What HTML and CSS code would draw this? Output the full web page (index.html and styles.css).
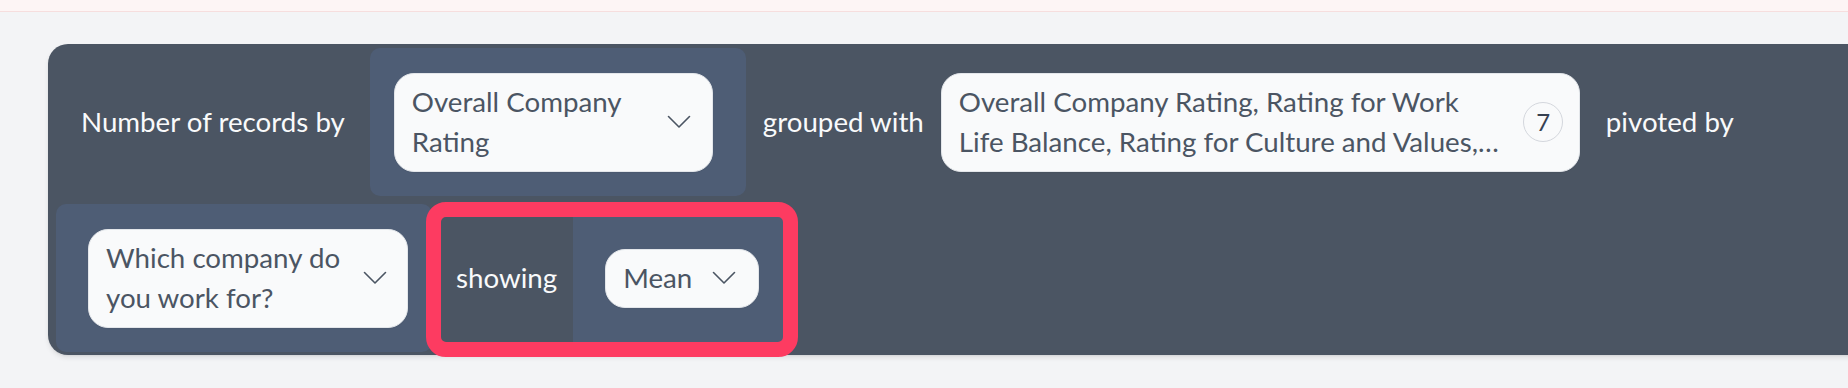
FILE: index.html
```html
<!DOCTYPE html>
<html lang="en">
<head>
<meta charset="utf-8">
<title>Query builder</title>
<link rel="stylesheet" href="styles.css">
</head>
<body>
<div class="topbar"></div>
<main class="page">
  <section class="panel">
    <div class="row row-first">
      <span class="label label-lead">Number of records by</span>
      <div class="group group-first">
        <div class="select select-first">
          <span class="select-text">Overall Company Rating</span>
          <svg class="chev" viewBox="0 0 24 14" aria-hidden="true"><polyline points="1.5,1.5 12,12 22.5,1.5"/></svg>
        </div>
      </div>
      <span class="label label-grouped">grouped with</span>
      <div class="select select-multi">
        <span class="select-text clamp">Overall Company Rating, Rating for Work Life Balance, Rating for Culture and Values, Rating for Career Opportunities, Rating for Compensation and Benefits, Rating for Senior Management, Rating for Diversity and Inclusion</span>
        <span class="badge">7</span>
      </div>
      <span class="label label-pivot">pivoted by</span>
    </div>
    <div class="row row-second">
      <div class="group group-which">
        <div class="select select-which">
          <span class="select-text">Which company do you work for?</span>
          <svg class="chev" viewBox="0 0 24 14" aria-hidden="true"><polyline points="1.5,1.5 12,12 22.5,1.5"/></svg>
        </div>
      </div>
      <div class="highlighted">
        <span class="label label-showing">showing</span>
        <div class="group group-mean">
          <div class="select select-mean">
            <span class="select-text">Mean</span>
            <svg class="chev" viewBox="0 0 24 14" aria-hidden="true"><polyline points="1.5,1.5 12,12 22.5,1.5"/></svg>
          </div>
        </div>
      </div>
    </div>
  </section>
</main>
</body>
</html>
```
FILE: styles.css
```css
* { box-sizing: border-box; }

html, body {
  margin: 0;
  padding: 0;
}

body {
  background: #f3f4f6;
  font-family: Lato, "Open Sans", "Liberation Sans", sans-serif;
  font-size: 27.7px;
  line-height: 40px;
  overflow: hidden;
  width: 1848px;
  height: 388px;
}

.topbar {
  height: 12px;
  background: #fdf5f5;
  border-bottom: 1px solid #f6dede;
}

.page {
  padding: 32px 0 0 48px;
}

.panel {
  width: 1900px;
  background: #4b5563;
  border-radius: 20px;
  padding: 4px 8px 3px 8px;
  box-shadow: 0 3px 5px rgba(0, 0, 0, 0.08), 0 1px 2px rgba(0, 0, 0, 0.06);
}

.row {
  display: flex;
  align-items: stretch;
  height: 148px;
}

.row-second {
  margin-top: 8px;
}

.label {
  display: flex;
  align-items: center;
  color: #f9fafb;
  white-space: nowrap;
}

.label-lead { padding: 0 25px 0 25px; }
.label-grouped { padding: 0 17px; }
.label-pivot { padding: 0 0 0 26px; }
.label-showing { padding: 0 16px 0 24px; }

.group {
  display: flex;
  align-items: center;
  background: #4e5d75;
  border-radius: 10px;
}

.group-first { padding: 24px 33px 24px 24px; }
.group-which { padding: 24px 24px 24px 32px; }
.group-mean { padding: 24px 24px 24px 32px; border-radius: 0; }

.select {
  display: flex;
  align-items: center;
  align-self: center;
  background: #f9fafb;
  border: 1.5px solid #e3e6ea;
  border-radius: 20px;
  padding: 8.5px 20.5px 8.5px 17px;
  color: #4b5563;
  box-shadow: 0 1px 1px rgba(0, 0, 0, 0.04);
}

.select-text {
  flex: 1;
}

.select-first { width: 319px; }
.select-which { width: 320px; }
.select-mean { width: 154px; }
.select-mean .select-text { flex: none; margin-right: 20px; }

.select-multi {
  width: 639px;
  padding-right: 15.5px;
}

.clamp {
  display: -webkit-box;
  -webkit-box-orient: vertical;
  -webkit-line-clamp: 2;
  overflow: hidden;
  width: 548px;
  flex: none;
}

.chev {
  width: 24px;
  height: 14px;
  flex: none;
  margin-left: 12px;
  fill: none;
  stroke: #4b5563;
  stroke-width: 1.6;
  stroke-linecap: round;
  stroke-linejoin: round;
}

.select-mean .chev { margin-left: 0; }

.badge {
  flex: none;
  margin-left: auto;
  width: 40px;
  height: 40px;
  border: 1.5px solid #d4d7dd;
  border-radius: 50%;
  display: flex;
  align-items: center;
  justify-content: center;
  font-size: 24px;
  line-height: 1;
  color: #374151;
}

.highlighted {
  position: relative;
  display: flex;
  align-items: stretch;
}

.highlighted::after {
  content: "";
  position: absolute;
  left: -6px;
  top: -2px;
  right: -15px;
  bottom: -5px;
  border: 15px solid #fd3b61;
  border-radius: 20px;
  pointer-events: none;
}
```
